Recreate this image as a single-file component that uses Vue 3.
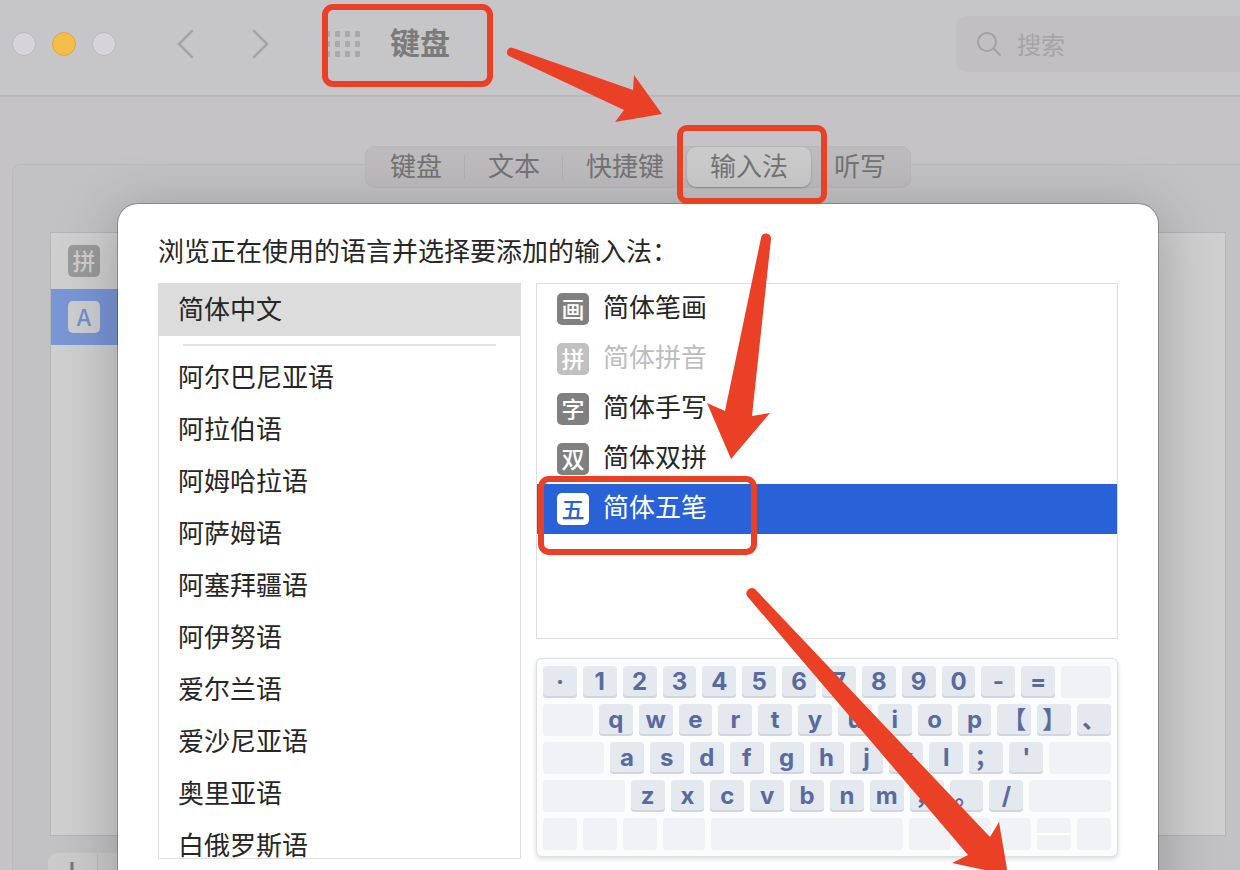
<script setup>
import { ref } from 'vue'

const tabs = ['键盘', '文本', '快捷键', '输入法', '听写']
const activeTab = ref('输入法')

const languages = [
  '阿尔巴尼亚语',
  '阿拉伯语',
  '阿姆哈拉语',
  '阿萨姆语',
  '阿塞拜疆语',
  '阿伊努语',
  '爱尔兰语',
  '爱沙尼亚语',
  '奥里亚语',
  '白俄罗斯语',
]
const language = ref('简体中文')

const sources = [
  { icon: '画', name: '简体笔画' },
  { icon: '拼', name: '简体拼音', disabled: true },
  { icon: '字', name: '简体手写' },
  { icon: '双', name: '简体双拼' },
  { icon: '五', name: '简体五笔' },
]
const source = ref('简体五笔')

// a string is a lettered key, a number is a blank key of that width
const rows = [
  ['·', '1', '2', '3', '4', '5', '6', '7', '8', '9', '0', '-', '=', 50],
  [50, 'q', 'w', 'e', 'r', 't', 'y', 'u', 'i', 'o', 'p', '【', '】', '、'],
  [61, 'a', 's', 'd', 'f', 'g', 'h', 'j', 'k', 'l', '；', "'", 62],
  [82, 'z', 'x', 'c', 'v', 'b', 'n', 'm', '，', '。', '/', 82],
  [34, 34, 34, 42, 193, 42, 34, 34, 'split', 34],
]

const isBlank = (key) => typeof key === 'number' || key === 'split'
const keyWidth = (key) => (typeof key === 'number' ? key : 34)
</script>

<template>
  <div class="window">
    <header class="toolbar">
      <div class="lights">
        <span class="light"></span>
        <span class="light yellow"></span>
        <span class="light"></span>
      </div>
      <div class="nav">
        <button type="button" aria-label="后退">
          <svg width="18" height="30" viewBox="0 0 18 30"><path d="M16 2 L3 15 L16 28" /></svg>
        </button>
        <button type="button" aria-label="前进">
          <svg width="18" height="30" viewBox="0 0 18 30"><path d="M2 2 L15 15 L2 28" /></svg>
        </button>
      </div>
      <svg class="dots" width="35" height="26" viewBox="0 0 35 26">
        <template v-for="y in 3" :key="y">
          <rect v-for="x in 4" :key="x" :x="(x - 1) * 10" :y="(y - 1) * 10" width="5" height="6" rx="1" />
        </template>
      </svg>
      <h1>键盘</h1>
      <label class="search">
        <svg width="26" height="26" viewBox="0 0 26 26">
          <circle cx="11" cy="11" r="9" />
          <path d="M17.500 17.500 L24 24" />
        </svg>
        <input type="text" placeholder="搜索" aria-label="搜索" />
      </label>
    </header>

    <main class="content">
      <nav class="tabs">
        <button
          v-for="tab in tabs"
          :key="tab"
          type="button"
          :class="{ active: tab === activeTab }"
          @click="activeTab = tab"
        >
          {{ tab }}
        </button>
      </nav>

      <section class="panel">
        <div class="installed">
          <div class="installed-row"><span class="badge">拼</span></div>
          <div class="installed-row current"><span class="badge">A</span></div>
        </div>
        <div class="edit">
          <button type="button" aria-label="添加">
            <svg width="22" height="22" viewBox="0 0 22 22"><path d="M11 0 V22 M0 11 H22" /></svg>
          </button>
          <button type="button" aria-label="移除"></button>
        </div>
      </section>

      <section class="sheet">
        <h2>浏览正在使用的语言并选择要添加的输入法：</h2>
        <div class="columns">
          <div class="languages">
            <button
              type="button"
              :class="{ selected: language === '简体中文' }"
              @click="language = '简体中文'"
            >
              简体中文
            </button>
            <hr />
            <button
              v-for="item in languages"
              :key="item"
              type="button"
              :class="{ selected: item === language }"
              @click="language = item"
            >
              {{ item }}
            </button>
          </div>

          <div class="right">
            <div class="sources">
              <button
                v-for="item in sources"
                :key="item.name"
                type="button"
                :disabled="item.disabled"
                :class="{ selected: item.name === source }"
                @click="source = item.name"
              >
                <span class="badge">{{ item.icon }}</span>
                <span class="name">{{ item.name }}</span>
              </button>
            </div>

            <div class="keyboard">
              <div v-for="(row, r) in rows" :key="r" class="key-row">
                <span
                  v-for="(key, k) in row"
                  :key="k"
                  class="key"
                  :class="{ blank: isBlank(key), split: key === 'split' }"
                  :style="{ flexGrow: keyWidth(key) }"
                  >{{ isBlank(key) ? '' : key }}</span
                >
              </div>
            </div>
          </div>
        </div>
      </section>
    </main>

    <svg class="marks" width="1240" height="870" viewBox="0 0 1240 870">
      <g class="frames">
        <rect x="325" y="7" width="165" height="77" rx="8" />
        <rect x="680" y="128" width="144" height="73" rx="7" />
        <rect x="541" y="479" width="213" height="73" rx="8" />
      </g>
      <path d="M513 48 L633 90 L634 75 L662 114 L615 122 L624 110 L509 56 A4.500 4.500 0 0 1 513 48 Z" />
      <path d="M771 239 L752 416 L770 413 L731 459 L707 403 L725 411 L761 238 A5 5 0 0 1 771 239 Z" />
      <path d="M755 589 L990 837 L999 822 L1008 875 L952 863 L968 855 L747 596 A5.500 5.500 0 0 1 755 589 Z" />
    </svg>
  </div>
</template>

<style>
body {
  background: #c5c3c6;
}
</style>

<style scoped>
.window {
  position: relative;
  height: 100vh;
  overflow: hidden;
  background: #c5c3c6;
  color: #262626;
  font-family: 'Noto Sans CJK SC', sans-serif;
  font-size: 26px;
  line-height: 36px;
}

button {
  border: none;
  padding: 0;
  background: none;
  color: inherit;
  font: inherit;
}

/* toolbar */
.toolbar {
  display: flex;
  align-items: center;
  height: 87px;
  padding: 0 0 8px 12px;
  border-bottom: 2px solid #b9b9bb;
  background: #c6c6c8;
}

.lights {
  display: flex;
  align-items: center;
  gap: 16px;
}

.light {
  box-sizing: border-box;
  width: 24px;
  height: 24px;
  border: 1px solid #b9b7bb;
  border-radius: 50%;
  background: #d6d4da;
}

.light.yellow {
  border-color: #dda83f;
  background: #f5be4b;
}

.nav {
  display: flex;
  gap: 58px;
  margin-left: 60px;
}

.nav button {
  display: flex;
}

.nav svg {
  fill: none;
  stroke: #a5a5a7;
  stroke-width: 2.5;
  stroke-linecap: round;
}

.dots {
  margin-left: 55px;
  fill: #a9a9ab;
}

h1 {
  margin: 0 0 0 30px;
  padding-bottom: 6px;
  color: #7b7b7d;
  font-size: 30px;
  font-weight: 700;
}

.search {
  display: flex;
  align-items: center;
  gap: 15px;
  box-sizing: border-box;
  width: 320px;
  height: 56px;
  margin: 0 -36px 0 auto;
  padding-left: 20px;
  border-radius: 10px;
  background: #c1bfc2;
}

.search svg {
  fill: none;
  stroke: #a2a1a4;
  stroke-width: 2;
  stroke-linecap: round;
}

.search input {
  flex: 1;
  min-width: 0;
  padding: 0;
  border: none;
  outline: none;
  background: none;
  font: inherit;
  font-size: 24px;
}

.search input::placeholder {
  color: #a5a4a7;
}

/* the window runs on past the right edge */
.content {
  position: relative;
  margin-right: -36px;
  padding: 49px 12px 0;
}

.tabs {
  position: relative;
  display: flex;
  width: max-content;
  margin: 0 auto;
  padding: 1px 2px;
  border-radius: 10px;
  background: #bdbbbe;
  box-shadow: inset 0 0 0 1px #b8b7ba;
  color: #747476;
}

.tabs button {
  height: 40px;
  padding: 0 23px 4px;
  border-radius: 9px;
}

.tabs button:nth-child(-n + 2) {
  background: linear-gradient(#b0afb2, #b0afb2) right / 1px 24px no-repeat;
}

.tabs button.active {
  background: #cbcbcb;
  box-shadow: 0 1px 2px rgba(0, 0, 0, 0.25);
}

.panel {
  height: 800px;
  margin-top: -24px;
  padding: 67px 37px 0;
  border: 1px solid #bab9bc;
  border-radius: 8px;
  background: #c2c2c4;
}

.installed {
  height: 602px;
  border: 1px solid #b5b5b6;
  background: #cfcfcf;
}

/* only the left pane of the box holds the list */
.installed-row {
  display: flex;
  align-items: center;
  width: 40%;
  height: 56px;
  padding-left: 17px;
}

.installed-row .badge {
  background: #9a9a9a;
  color: #cfcfcf;
}

.installed-row.current {
  background: #7996d6;
}

.installed-row.current .badge {
  background: #cdced0;
  color: #7490d2;
}

.edit {
  display: flex;
  width: 98px;
  height: 44px;
  margin: 17px 0 0 -2px;
  border-radius: 9px;
  background: #cbcbcb;
}

.edit button {
  flex: 1;
  padding-bottom: 4px;
}

.edit button + button {
  border-left: 1px solid #bcbcbc;
}

.edit svg {
  display: block;
  margin: 0 auto;
  stroke: #777;
  stroke-width: 3;
}

/* sheet */
.sheet {
  position: absolute;
  top: 107px;
  right: 118px;
  left: 118px;
  padding: 28px 40px 90px;
  border-radius: 20px;
  background: #fff;
  box-shadow:
    0 0 0 1px rgba(0, 0, 0, 0.25),
    0 10px 60px rgba(0, 0, 0, 0.25);
}

h2 {
  margin: 0 0 15px;
  font-size: 26px;
  font-weight: 400;
}

.columns {
  display: grid;
  grid-template-columns: 363fr 582fr;
  align-items: start;
  gap: 15px;
}

.languages,
.sources {
  box-sizing: border-box;
  border: 1px solid #dedede;
}

.languages button {
  display: block;
  width: 100%;
  padding: 10px 0 14px 19px;
  line-height: 28px;
  text-align: left;
}

.languages button:last-child {
  padding-bottom: 0;
}

.languages .selected {
  background: #dcdcdc;
}

.languages hr {
  height: 2px;
  margin: 8px 24px 6px;
  border: none;
  background: #e4e4e4;
}

.sources {
  height: 356px;
}

.sources button {
  display: flex;
  align-items: center;
  gap: 14px;
  width: 100%;
  height: 50px;
  padding-left: 20px;
}

.sources .name {
  padding-bottom: 6px;
}

.sources .selected {
  background: #2961d9;
  color: #fff;
}

.sources button:disabled {
  color: #bdbdbd;
}

.badge {
  width: 32px;
  height: 32px;
  border-radius: 5px;
  background: #808080;
  color: #fff;
  font-size: 23px;
  font-weight: 500;
  line-height: 30px;
  text-align: center;
}

.sources button:disabled .badge {
  background: #c0c0c0;
}

.sources .selected .badge {
  background: #fff;
  color: #2961d9;
}

.keyboard {
  display: flex;
  flex-direction: column;
  gap: 6px;
  margin-top: 19px;
  padding: 7px 6px 6px;
  border: 1px solid #dcdfe3;
  border-radius: 6px;
  background: #fbfcfe;
  box-shadow: 0 2px 5px rgba(0, 0, 0, 0.15);
}

.key-row {
  display: flex;
  gap: 6px;
}

.key {
  flex: 1 0 0;
  width: 0;
  height: 32px;
  border-radius: 4px;
  background: #e4e8ef;
  box-shadow: inset 0 -2px 0 #d0d6e0;
  color: #596a9f;
  font-family: Inter, 'Noto Sans CJK SC', sans-serif;
  font-size: 24px;
  font-weight: 700;
  line-height: 32px;
  text-align: center;
}

.key.blank {
  background: #f1f2f6;
  box-shadow: none;
}

.key.split {
  background: linear-gradient(#f1f2f6 15px, #fff 15px, #fff 17px, #f1f2f6 17px);
}

/* red callouts drawn over everything */
.marks {
  position: absolute;
  top: 0;
  left: 0;
  fill: #ea4025;
  pointer-events: none;
}

.frames {
  fill: none;
  stroke: #ea4025;
  stroke-width: 6;
}
</style>
